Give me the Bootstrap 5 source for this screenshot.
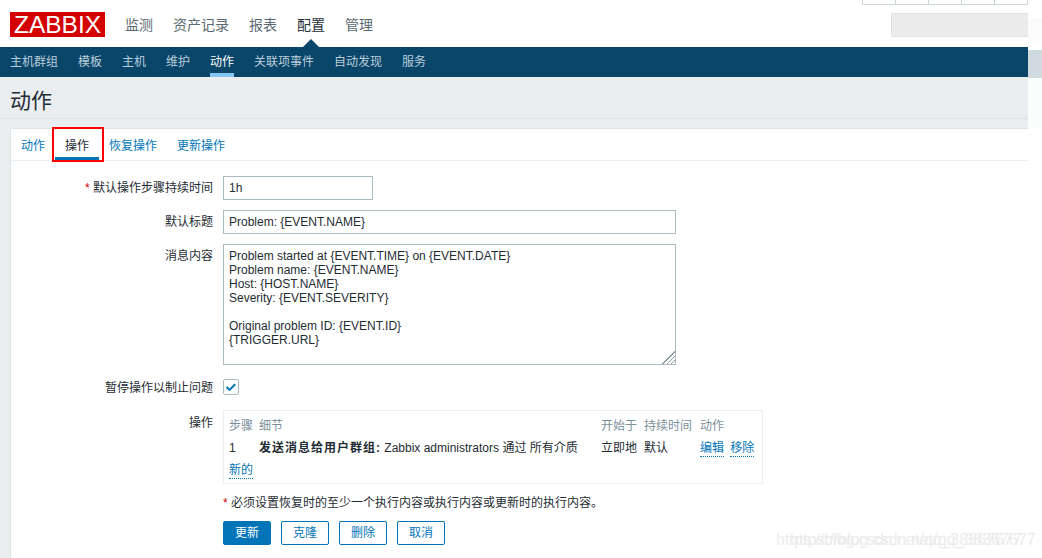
<!DOCTYPE html>
<html lang="zh-CN">
  <head>
    <meta charset="UTF-8" />
    <meta name="viewport" content="width=device-width, initial-scale=1.0" />
    <title>动作</title>
    <link href="https://cdn.jsdelivr.net/npm/bootstrap@5.3.0/dist/css/bootstrap.min.css" rel="stylesheet" />
    <style>
      html, body { height: 558px; overflow: hidden; }
      body { background: #fff; color: #1f2c33; font: 12px/14px "Liberation Sans", "Noto Sans CJK SC", sans-serif; }
      a { text-decoration: none; }
      .page-shell { height: 558px; position: relative; overflow: hidden; }
      .page-main { width: 1028px; flex: none; }
      .side-strip { flex: 1; }
      .side-a { height: 18px; }
      .side-b { height: 23px; background: #fbfbfb; }
      .side-c { height: 9px; }
      .side-d { height: 28px; background: #cfdae1; }
      .side-e { height: 50px; background: #fbfcfc; }

      .top-head { height: 47px; position: relative; }
      .zbx-logo { background: #d40000; color: #fff; width: 95px; height: 25px; font-size: 24.5px; line-height: 25px; text-align: center; margin: 12px 0 0 10px; }
      .main-menu { margin: 16px 0 0 10px; }
      .main-menu a { color: #5b6a72; font-size: 14px; line-height: 18px; padding: 0 10px; display: block; }
      .main-menu a.now { color: #1f2c33; position: relative; }
      .main-menu a.now::after { content: ""; position: absolute; left: 50%; margin-left: -8px; top: 23px; border: 8px solid transparent; border-top: 0; border-bottom-color: #0a466a; }
      .mini-cells { position: absolute; top: 0; right: 0; width: 166px; height: 5px; border: 1px solid #ccd5d9; border-top: 0; }
      .mini-cells span { flex: 1; border-right: 1px solid #ccd5d9; }
      .mini-cells span:last-child { border-right: 0; }
      .search-stub { position: absolute; top: 13px; right: 0; width: 137px; height: 24px; background: #ebebeb; border: 1px solid #e2e2e2; border-right: 0; }

      .sub-menu { background: #0a466a; height: 30px; padding-left: 10px; gap: 20px; }
      .sub-menu a { color: #b9cddb; line-height: 30px; height: 30px; display: block; }
      .sub-menu a.now { color: #fff; border-bottom: 4px solid #84c5f4; }

      .page-body { background: #ebeef0; height: 481px; padding: 0 0 0 10px; }
      .page-title { height: 42px; font-size: 21px; line-height: 24px; font-weight: 400; color: #1f2c33; margin: 0; padding-top: 12px; border-bottom: 1px solid #dfe4e7; margin-left: -10px; padding-left: 10px; }
      .form-panel { margin-top: 9px; background: #fff; border: 1px solid #dfe4e7; border-right: 0; height: 440px; }

      .tab-row { height: 32px; border-bottom: 1px solid #ebeef0; position: relative; }
      .tab-row a { color: #0275b8; line-height: 35px; padding: 0 10px; display: block; height: 31px; }
      .tab-row a.now { color: #1f2c33; border-bottom: 3px solid #0275b8; position: relative; }
      .tab-row a.now::after { content: ""; position: absolute; left: -3px; right: -5px; top: -2px; height: 35px; border: 2px solid #f00; }

      .form-area { padding-top: 15px; }
      .field-row { margin-bottom: 10px; }
      .field-label { width: 202px; flex: none; text-align: right; margin-right: 10px; color: #1f2c33; line-height: 24px; }
      .field-label i { color: #d40000; font-style: normal; }
      .zbx-input { display: block; height: 24px; border: 1px solid #acbbc2; color: #1f2c33; font: 12px/14px "Liberation Sans", "Noto Sans CJK SC", sans-serif; padding: 0 5px; border-radius: 0; outline: 0; }
      .w-short { width: 150px; }
      .w-long { width: 453px; }
      textarea.zbx-input { height: 121px; padding: 4px 5px; line-height: 14px; }
      textarea.zbx-input::-webkit-resizer { background: linear-gradient(135deg, #fff 50%, transparent 50%), repeating-linear-gradient(135deg, #8a9aa2 0 1px, #fff 1px 3px); }
      .check-row { padding-top: 1px; }
      .check-slot { margin-top: 3px; margin-bottom: 5px; }
      .zbx-check { appearance: none; display: block; width: 16px; height: 16px; margin: 0; border: 1px solid #acbbc2; border-radius: 2px; background: #fff url("data:image/svg+xml,%3Csvg xmlns='http://www.w3.org/2000/svg' viewBox='0 0 16 16'%3E%3Cpath d='M3 8l3.300 3.300 6.500-6.500' fill='none' stroke='%230275b8' stroke-width='2.400'/%3E%3C/svg%3E") center no-repeat; }

      .ops-box { width: 540px; height: 74px; border: 1px solid #ebeef0; padding: 4px 5px; }
      .ops-label { padding-top: 1px; }
      .ops-grid { margin: 0; width: 530px; table-layout: fixed; color: #1f2c33; }
      .ops-grid th, .ops-grid td { padding: 0; height: 22px; line-height: 22px; font-weight: 400; border: 0; background: transparent; box-shadow: none; white-space: nowrap; }
      .ops-grid th { color: #7b8f9b; }
      .ops-grid b { letter-spacing: 1px; }
      .ops-grid .col-step { width: 30px; }
      .ops-grid .col-detail { width: 342px; }
      .ops-grid .col-start { width: 43px; }
      .ops-grid .col-last { width: 56px; }
      .dot-link { color: #0275b8; border-bottom: 1px dotted #0275b8; display: inline-block; line-height: 15px; }
      .dot-link + .dot-link { margin-left: 3px; }
      .note-line { margin: 12px 0 0 212px; line-height: 14px; }
      .note-line i { color: #d40000; font-style: normal; }
      .btn-line { margin: 11px 0 0 212px; gap: 10px; }
      .btn-line .btn { width: 48px; height: 24px; padding: 0; font-size: 12px; line-height: 22px; border-radius: 2px; border: 1px solid #0275b8; }
      .btn-line .btn-outline-primary { color: #0275b8; background: #fff; }
      .btn-line .btn-primary { background: #0275b8; color: #fff; }

      .wm { position: absolute; top: 530px; color: #ececec; font-size: 16px; line-height: 20px; white-space: nowrap; }
      .wm-a { left: 776px; }
      .wm-b { left: 790px; }
    </style>
  </head>
  <body>
    <div class="page-shell d-flex">
      <div class="page-main">
        <header class="top-head d-flex">
          <div class="zbx-logo">ZABBIX</div>
          <nav class="main-menu d-flex">
            <a href="#">监测</a>
            <a href="#">资产记录</a>
            <a href="#">报表</a>
            <a href="#" class="now">配置</a>
            <a href="#">管理</a>
          </nav>
          <div class="mini-cells d-flex"><span></span><span></span><span></span><span></span><span></span></div>
          <div class="search-stub"></div>
        </header>
        <nav class="sub-menu d-flex">
          <a href="#">主机群组</a>
          <a href="#">模板</a>
          <a href="#">主机</a>
          <a href="#">维护</a>
          <a href="#" class="now">动作</a>
          <a href="#">关联项事件</a>
          <a href="#">自动发现</a>
          <a href="#">服务</a>
        </nav>
        <main class="page-body">
          <h1 class="page-title">动作</h1>
          <section class="form-panel">
            <div class="tab-row d-flex">
              <a href="#">动作</a>
              <a href="#" class="now">操作</a>
              <a href="#">恢复操作</a>
              <a href="#">更新操作</a>
            </div>
            <form class="form-area">
              <div class="field-row d-flex">
                <label class="field-label"><i>*</i> 默认操作步骤持续时间</label>
                <input class="zbx-input w-short" type="text" value="1h" />
              </div>
              <div class="field-row d-flex">
                <label class="field-label">默认标题</label>
                <input class="zbx-input w-long" type="text" value="Problem: {EVENT.NAME}" />
              </div>
              <div class="field-row d-flex">
                <label class="field-label">消息内容</label>
                <textarea class="zbx-input w-long">Problem started at {EVENT.TIME} on {EVENT.DATE}
Problem name: {EVENT.NAME}
Host: {HOST.NAME}
Severity: {EVENT.SEVERITY}

Original problem ID: {EVENT.ID}
{TRIGGER.URL}</textarea>
              </div>
              <div class="field-row check-row d-flex">
                <label class="field-label">暂停操作以制止问题</label>
                <div class="check-slot"><input class="zbx-check" type="checkbox" checked /></div>
              </div>
              <div class="d-flex">
                <label class="field-label ops-label">操作</label>
                <div class="ops-box">
                  <table class="table ops-grid">
                    <thead>
                      <tr>
                        <th class="col-step">步骤</th>
                        <th class="col-detail">细节</th>
                        <th class="col-start">开始于</th>
                        <th class="col-last">持续时间</th>
                        <th>动作</th>
                      </tr>
                    </thead>
                    <tbody>
                      <tr>
                        <td>1</td>
                        <td><b>发送消息给用户群组:</b> Zabbix administrators 通过 所有介质</td>
                        <td>立即地</td>
                        <td>默认</td>
                        <td><a href="#" class="dot-link">编辑</a> <a href="#" class="dot-link">移除</a></td>
                      </tr>
                      <tr>
                        <td colspan="5"><a href="#" class="dot-link">新的</a></td>
                      </tr>
                    </tbody>
                  </table>
                </div>
              </div>
              <p class="note-line"><i>*</i> 必须设置恢复时的至少一个执行内容或执行内容或更新时的执行内容。</p>
              <div class="btn-line d-flex">
                <button type="button" class="btn btn-primary">更新</button>
                <button type="button" class="btn btn-outline-primary">克隆</button>
                <button type="button" class="btn btn-outline-primary">删除</button>
                <button type="button" class="btn btn-outline-primary">取消</button>
              </div>
            </form>
          </section>
        </main>
      </div>
      <div class="side-strip">
        <div class="side-a"></div>
        <div class="side-b"></div>
        <div class="side-c"></div>
        <div class="side-d"></div>
        <div class="side-e"></div>
      </div>
      <div class="wm wm-a">https://blog.csdn.net/qq_38367677</div>
      <div class="wm wm-b">https://blog.csdn.net/qq_38367677</div>
    </div>
    <script src="https://cdn.jsdelivr.net/npm/bootstrap@5.3.0/dist/js/bootstrap.bundle.min.js"></script>
  </body>
</html>
